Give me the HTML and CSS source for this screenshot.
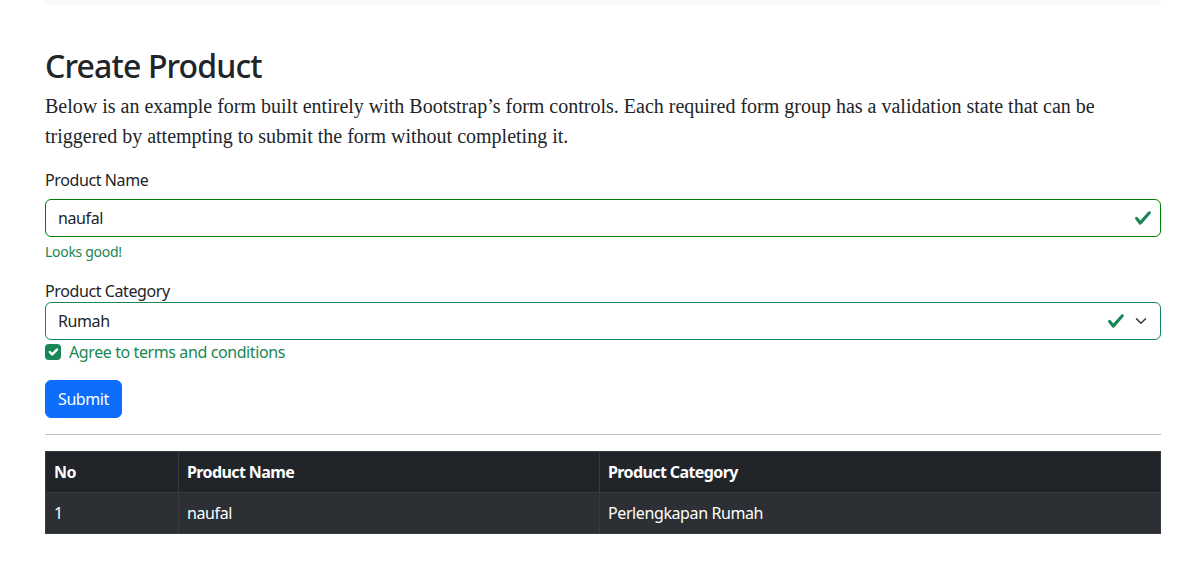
FILE: index.html
```html
<!DOCTYPE html>
<html lang="en">
<head>
<meta charset="utf-8">
<title>Create Product</title>
<link rel="stylesheet" href="styles.css">
</head>
<body>
<div class="page">
  <div class="topbar"></div>
  <h2 class="title">Create Product</h2>
  <p class="lead">Below is an example form built entirely with Bootstrap’s form controls. Each required form group has a validation state that can be triggered by attempting to submit the form without completing it.</p>

  <form class="form">
    <label class="form-label">Product Name</label>
    <div class="field">
      <div class="control control-name">naufal</div>
      <svg class="valid-icon" viewBox="0 0 8 8" width="18" height="18"><path fill="#198754" d="M2.3 6.73.6 4.53c-.4-1.04.46-1.4 1.1-.8l1.1 1.4 3.4-3.8c.6-.63 1.6-.27 1.2.7l-4 4.6c-.43.5-.8.4-1.1.1z"/></svg>
    </div>
    <div class="feedback">Looks good!</div>

    <label class="form-label label-cat">Product Category</label>
    <div class="field">
      <div class="control control-select">Rumah</div>
      <svg class="valid-icon select-valid" viewBox="0 0 8 8" width="18" height="18"><path fill="#198754" d="M2.3 6.73.6 4.53c-.4-1.04.46-1.4 1.1-.8l1.1 1.4 3.4-3.8c.6-.63 1.6-.27 1.2.7l-4 4.6c-.43.5-.8.4-1.1.1z"/></svg>
      <svg class="chevron" viewBox="0 0 16 16" width="16" height="12"><path fill="none" stroke="#343a40" stroke-linecap="round" stroke-linejoin="round" stroke-width="2" d="m2 5 6 6 6-6"/></svg>
    </div>

    <div class="form-check">
      <span class="check-box"><svg viewBox="0 0 20 20" width="16" height="16"><path fill="none" stroke="#fff" stroke-linecap="round" stroke-linejoin="round" stroke-width="3" d="m6 10 3 3 6-6"/></svg></span>
      <span class="check-label">Agree to terms and conditions</span>
    </div>

    <button type="button" class="btn">Submit</button>
  </form>

  <hr class="divider">

  <table class="table">
    <thead>
      <tr><th class="col-no">No</th><th class="col-name">Product Name</th><th>Product Category</th></tr>
    </thead>
    <tbody>
      <tr><td>1</td><td>naufal</td><td>Perlengkapan Rumah</td></tr>
    </tbody>
  </table>
</div>
</body>
</html>
```

FILE: styles.css
```css
* { box-sizing: border-box; }
html, body { margin: 0; padding: 0; background: #fff; }
body {
  font-family: "Noto Sans", "Open Sans", sans-serif;
  font-size: 16px;
  line-height: 1.5;
  color: #212529;
  letter-spacing: -0.4px;
}
.page {
  width: 1116px;
  margin-left: 45px;
}
.topbar {
  height: 5px;
  background: #f8f9fa;
}
.title {
  margin: 42px 0 6px;
  font-size: 32px;
  font-weight: 500;
  line-height: 1.2;
  letter-spacing: -0.85px;
}
.lead {
  margin: 0 0 17px;
  font-family: "Liberation Serif", "Times New Roman", serif;
  font-size: 20px;
  line-height: 30px;
  letter-spacing: 0;
}
.form { display: flex; flex-direction: column; align-items: flex-start; }
.form-label {
  display: block;
  margin-bottom: 7px;
  line-height: 24px;
}
.label-cat { margin-top: 17px; margin-bottom: -1px; }
.field {
  position: relative;
  width: 100%;
}
.control {
  width: 100%;
  height: 38px;
  padding: 6px 12px;
  border: 1px solid #198754;
  border-radius: 6px;
  line-height: 24px;
  background: #fff;
}
.control-name { border-color: #008000; }
.valid-icon {
  position: absolute;
  right: 9px;
  top: 10px;
}
.select-valid { right: 36px; }
.chevron {
  position: absolute;
  right: 12px;
  top: 13px;
}
.feedback {
  margin-top: 4px;
  font-size: 14px;
  line-height: 21px;
  color: #198754;
  letter-spacing: -0.3px;
}
.form-check {
  display: flex;
  align-items: center;
  gap: 8px;
  min-height: 24px;
  margin-bottom: 16px;
}
.check-box {
  width: 16px;
  height: 16px;
  border-radius: 4px;
  background: #198754;
  display: flex;
}
.check-label { color: #198754; line-height: 24px; }
.btn {
  font-family: inherit;
  font-size: 16px;
  line-height: 24px;
  padding: 6px 12px;
  border: 1px solid #0d6efd;
  border-radius: 6px;
  background: #0d6efd;
  color: #fff;
  letter-spacing: -0.4px;
}
.divider {
  margin: 16px 0;
  border: 0;
  border-top: 1px solid #bfbfbf;
}
.table {
  width: 100%;
  border-collapse: collapse;
  color: #fff;
  margin-top: 16px;
}
.table th, .table td {
  text-align: left;
  padding: 8px;
  line-height: 24px;
  border: 1px solid #373b3e;
}
.table th { font-weight: 700; background: #212529; letter-spacing: -0.6px; }
.table td { background: #2c3034; }
.col-no { width: 133px; }
.col-name { width: 421px; }
```
